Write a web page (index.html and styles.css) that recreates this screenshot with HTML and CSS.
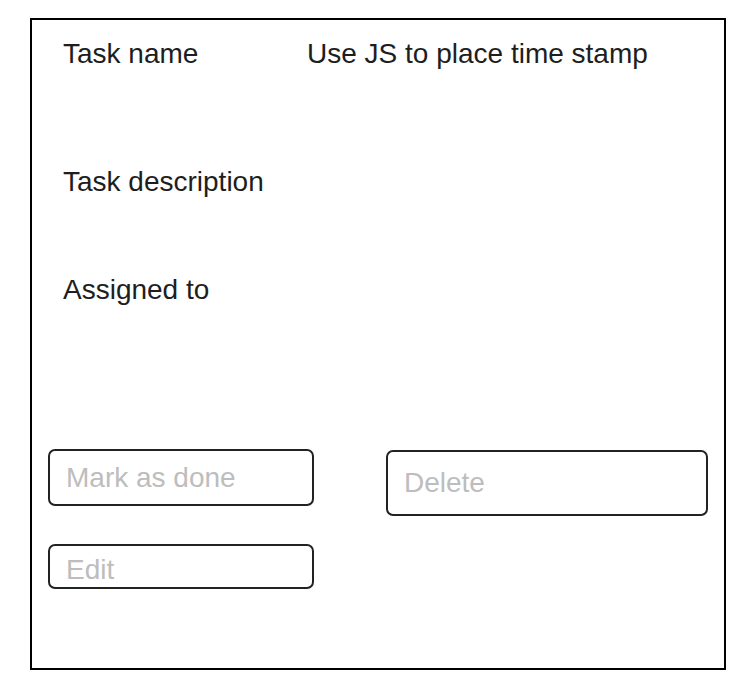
FILE: index.html
```html
<!DOCTYPE html>
<html lang="en">
<head>
<meta charset="utf-8">
<title>Task</title>
<link rel="stylesheet" href="styles.css">
</head>
<body>
<div class="card">
  <div class="info">
    <div class="row row-name">
      <div class="label">Task name</div>
      <div class="value">Use JS to place time stamp</div>
    </div>
    <div class="row row-desc">
      <div class="label">Task description</div>
      <div class="value"></div>
    </div>
    <div class="row row-assigned">
      <div class="label">Assigned to</div>
      <div class="value"></div>
    </div>
  </div>
  <div class="actions">
    <input class="field field-done" type="text" placeholder="Mark as done">
    <input class="field field-delete" type="text" placeholder="Delete">
    <input class="field field-edit" type="text" placeholder="Edit">
  </div>
</div>
</body>
</html>
```

FILE: styles.css
```css
html, body {
  margin: 0;
  padding: 0;
  background: #ffffff;
}

body {
  font-family: "Liberation Sans", Arial, Helvetica, sans-serif;
  color: #1e1e1e;
}

.card {
  box-sizing: border-box;
  margin: 18px 0 0 30px;
  width: 696px;
  height: 652px;
  border: 2px solid #000000;
  padding: 19px 16px 0 16px;
}

.info {
  padding-left: 15px;
  display: flex;
  flex-direction: column;
}

.row {
  display: grid;
  grid-template-columns: 244px 1fr;
  font-size: 28px;
  line-height: 30px;
}

.row-name {
  margin-bottom: 98px;
}

.row-desc {
  margin-bottom: 78px;
}

.row-assigned {
  margin-bottom: 0;
}

.actions {
  margin-top: 144px;
  display: grid;
  grid-template-columns: 266px 322px;
  column-gap: 72px;
  row-gap: 28px;
  align-items: start;
}

.field {
  box-sizing: border-box;
  border: 2px solid #222222;
  border-radius: 7px;
  padding: 0 16px;
  font-family: "Liberation Sans", Arial, Helvetica, sans-serif;
  font-size: 28px;
  color: #222222;
  background: #ffffff;
  outline: none;
  margin: 0;
}

.field::placeholder {
  color: #bdbdbd;
  opacity: 1;
}

.field-done {
  width: 266px;
  height: 57px;
}

.field-delete {
  width: 322px;
  height: 66px;
  margin-top: 1px;
}

.field-edit {
  width: 266px;
  height: 45px;
  padding-top: 6px;
}
```
